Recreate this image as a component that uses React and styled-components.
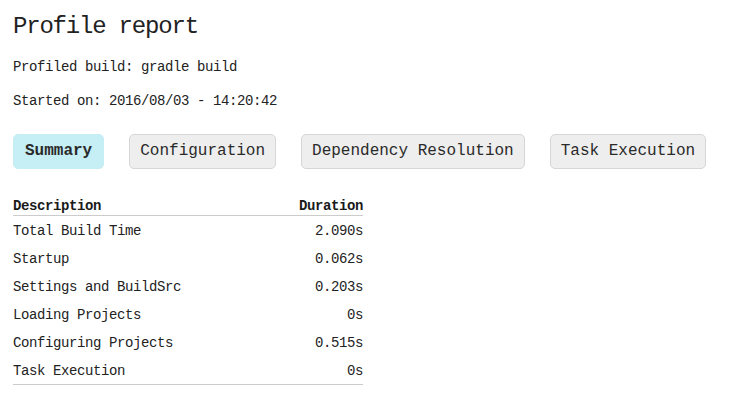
import React from 'react';
import styled, { createGlobalStyle } from 'styled-components';

const GlobalStyle = createGlobalStyle`
  body {
    margin: 0;
    background: #ffffff;
    color: #222222;
    font-family: "Liberation Mono", "DejaVu Sans Mono", monospace;
  }
`;

const Page = styled.div`
  padding: 0 13px;
`;

const Title = styled.h1`
  margin: 13px 0 0;
  font-size: 24px;
  font-weight: normal;
  letter-spacing: -1.2px;
  line-height: 28px;
  color: #222222;
`;

const Info = styled.p`
  margin: 18px 0 0;
  font-size: 14px;
  letter-spacing: -0.4px;
  line-height: 16px;
`;

const Tabs = styled.div`
  display: flex;
  gap: 25px;
  margin-top: 25px;
`;

const Tab = styled.button`
  height: 35px;
  padding: 0 ${props => props.active ? '11px' : '10px'};
  border: 1px solid ${props => props.active ? '#c6eff5' : '#d6d6d6'};
  border-radius: 5px;
  background: ${props => props.active ? '#c6eff5' : '#eeeeee'};
  color: #2a2a2a;
  font-family: "Liberation Mono", "DejaVu Sans Mono", monospace;
  font-size: 16px;
  font-weight: ${props => props.active ? 'bold' : 'normal'};
  line-height: 17px;
  cursor: pointer;
`;

const Table = styled.table`
  width: 350px;
  margin-top: 28px;
  border-collapse: collapse;
  border-bottom: 1px solid #cccccc;
  font-size: 14px;
  letter-spacing: -0.4px;
  line-height: 16px;
`;

const HeadCell = styled.th`
  padding: 1px 0 1px;
  border-bottom: 1px solid #cccccc;
  font-weight: bold;
  text-align: ${props => props.numeric ? 'right' : 'left'};
  color: #1a1a1a;
`;

const Cell = styled.td`
  padding: 7px 0 5px;
  text-align: ${props => props.numeric ? 'right' : 'left'};
`;

const tabs = ['Summary', 'Configuration', 'Dependency Resolution', 'Task Execution'];

const rows = [
  ['Total Build Time', '2.090s'],
  ['Startup', '0.062s'],
  ['Settings and BuildSrc', '0.203s'],
  ['Loading Projects', '0s'],
  ['Configuring Projects', '0.515s'],
  ['Task Execution', '0s'],
];

const App = () => {
  return (
    <Page>
      <GlobalStyle />
      <Title>Profile report</Title>
      <Info>Profiled build: gradle build</Info>
      <Info>Started on: 2016/08/03 - 14:20:42</Info>
      <Tabs>
        {tabs.map((t, i) => (
          <Tab key={t} active={i === 0}>{t}</Tab>
        ))}
      </Tabs>
      <Table>
        <thead>
          <tr>
            <HeadCell>Description</HeadCell>
            <HeadCell numeric>Duration</HeadCell>
          </tr>
        </thead>
        <tbody>
          {rows.map(([label, value]) => (
            <tr key={label}>
              <Cell>{label}</Cell>
              <Cell numeric>{value}</Cell>
            </tr>
          ))}
        </tbody>
      </Table>
    </Page>
  );
};

export default App;
